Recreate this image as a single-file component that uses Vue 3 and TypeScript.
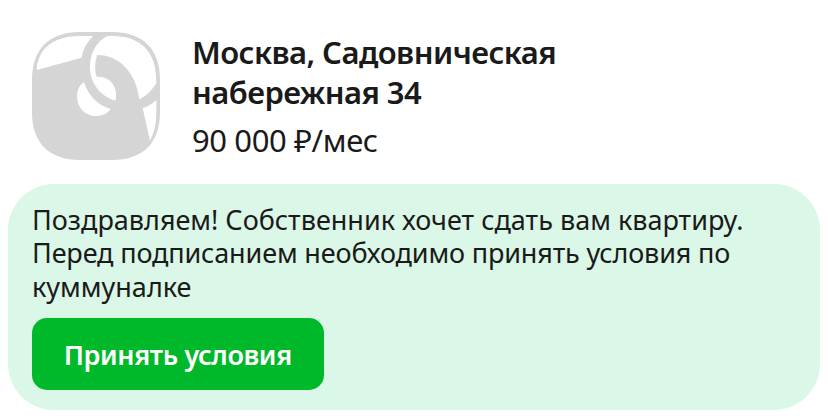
<script setup lang="ts">
interface Offer {
  address: string[]
  price: string
  message: string[]
  action: string
}

const offer: Offer = {
  address: ['Москва, Садовническая', 'набережная 34'],
  price: '90 000 ₽/мес',
  message: [
    'Поздравляем! Собственник хочет сдать вам квартиру.',
    'Перед подписанием необходимо принять условия по',
    'куммуналке',
  ],
  action: 'Принять условия',
}
</script>

<template>
  <main class="page">
    <header class="flat">
      <svg class="thumb" viewBox="0 0 128 128" aria-hidden="true">
        <path
          fill="#d5d5d5"
          d="M48 0H80C111 0 128 17 128 48V80C128 111 111 128 80 128H48C17 128 0 111 0 80V48C0 17 17 0 48 0Z"
        />
        <g fill="#fff">
          <path d="M4.700 38L49.700 25.700C51 17 55 10 61.300 4H48C22 4 6 16 4.700 38Z" />
          <path
            d="M75.300 4H80C108.500 4 124 19.500 124.300 48V51.300C119.500 59 114 64 107.300 67.300C104.500 42 88 23 65.300 23C62.600 30 62.600 38 64.700 44.700C76 44 84 52 84 62Q84.300 66 83.300 68.700C68 64 58 51 58 34.700C58 20 65 9.500 75.300 4Z"
          />
          <path d="M52 50.300C47.500 53 45 58 45 64C45 76 53 84 64 84C70 84 75 82 78.700 77C66 73.500 56.500 64 52 50.300Z" />
          <path d="M110.700 76.300C116 74.500 121 71.500 124.300 68V80C124.300 93 122 101 118 108.700Z" />
        </g>
      </svg>
      <div class="info">
        <h1 class="address">
          <span v-for="line in offer.address" :key="line" class="line">{{ line }}</span>
        </h1>
        <p class="price">{{ offer.price }}</p>
      </div>
    </header>
    <section class="notice">
      <p class="message">
        <span v-for="line in offer.message" :key="line" class="line">{{ line }}</span>
      </p>
      <button class="action" type="button">{{ offer.action }}</button>
    </section>
  </main>
</template>

<style>
body {
  margin: 0;
  background: #fff;
}
</style>

<style scoped>
.page {
  box-sizing: border-box;
  width: 828px;
  height: 419px;
  padding: 32px 8px 9px;
  background: #fff;
  color: #1a1a1a;
  font-family: 'Noto Sans', sans-serif;
}

.flat {
  display: flex;
  gap: 32px;
  height: 152px;
  padding-left: 24px;
}

.thumb {
  flex: none;
  width: 128px;
  height: 128px;
}

.line {
  display: block;
  width: max-content;
}

.address {
  margin: 0;
  font-size: 31px;
  font-weight: 600;
  line-height: 40px;
  letter-spacing: -0.56px;
}

.price {
  width: max-content;
  margin: 8px 0 0;
  font-size: 31px;
  line-height: 40px;
  letter-spacing: -0.4px;
}

.notice {
  box-sizing: border-box;
  width: 812px;
  height: 226px;
  padding: 19px 24px 20px;
  border-radius: 46px;
  background: #dbf7e7;
}

.message {
  margin: 0 0 15.6px;
  font-size: 27px;
  line-height: 33.3px;
}

.message .line:nth-child(2) {
  letter-spacing: -0.15px;
}

.action {
  display: flex;
  align-items: center;
  justify-content: center;
  width: 291.5px;
  height: 71.5px;
  padding: 0;
  border: 0;
  border-radius: 15px;
  background: #00b92a;
  color: #fff;
  font-family: inherit;
  font-size: 27px;
  font-weight: 600;
  letter-spacing: -0.4px;
  white-space: nowrap;
}
</style>
